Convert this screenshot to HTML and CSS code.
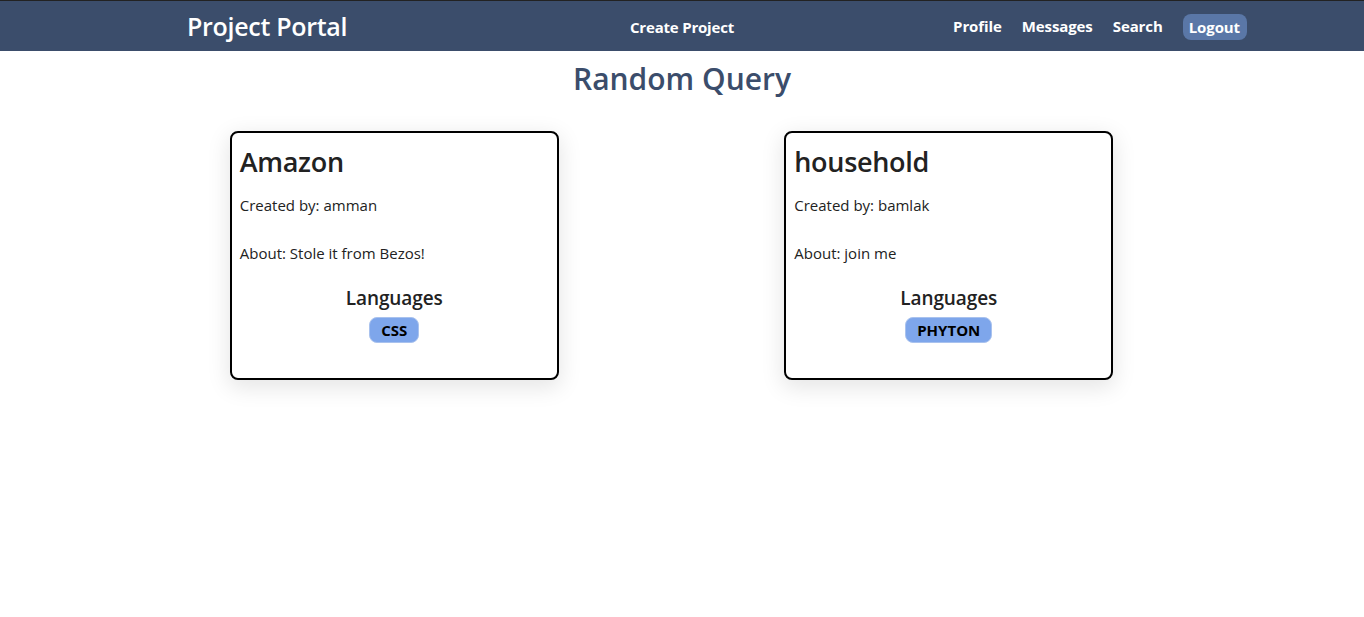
FILE: index.html
```html
<!DOCTYPE html>
<html lang="en">
<head>
<meta charset="utf-8">
<title>Project Portal</title>
<link rel="stylesheet" href="styles.css">
</head>
<body>
<header class="nav">
  <div class="nav-inner">
    <a class="brand" href="#">Project Portal</a>
    <a class="nav-center" href="#">Create Project</a>
    <nav class="nav-links">
      <a href="#">Profile</a>
      <a href="#">Messages</a>
      <a href="#">Search</a>
      <a class="logout" href="#">Logout</a>
    </nav>
  </div>
</header>
<main>
  <h1 class="page-title">Random Query</h1>
  <div class="cards">
    <div class="cell">
      <div class="card">
        <h2>Amazon</h2>
        <p>Created by: amman</p>
        <p>About: Stole it from Bezos!</p>
        <h3>Languages</h3>
        <div class="badges"><span class="badge">CSS</span></div>
      </div>
    </div>
    <div class="cell">
      <div class="card">
        <h2>household</h2>
        <p>Created by: bamlak</p>
        <p>About: join me</p>
        <h3>Languages</h3>
        <div class="badges"><span class="badge">PHYTON</span></div>
      </div>
    </div>
  </div>
</main>
</body>
</html>
```
FILE: styles.css
```css
* { box-sizing: border-box; }
html, body { min-height: 100%; }
body {
  margin: 0;
  min-height: 100vh;
  font-family: "Open Sans", "Noto Sans", sans-serif;
  color: #222;
  background: #fff;
}
a { text-decoration: none; color: inherit; }
.nav {
  background: #3b4d6b;
  border-top: 1px solid #222;
  height: 51px;
}
.nav-inner {
  display: grid;
  grid-template-columns: 1fr auto 1fr;
  align-items: center;
  height: 100%;
  padding: 0 117px;
}
.brand {
  color: #fff;
  font-size: 25px;
  font-weight: 600;
  padding-left: 70px;
  letter-spacing: -0.3px;
}
.nav-center {
  color: #fff;
  font-weight: 700;
  font-size: 15px;
  letter-spacing: -0.2px;
  padding-top: 1px;
}
.nav-links {
  display: flex;
  justify-content: flex-end;
  align-items: center;
  gap: 20px;
}
.nav-links a {
  color: #fff;
  font-weight: 700;
  font-size: 15px;
  letter-spacing: -0.1px;
}
.nav-links .logout {
  background: #5a77a7;
  border-radius: 8px;
  padding: 3px 7px 3px 6px;
  margin-top: 1px;
}
.page-title {
  margin: 8px 0 0;
  text-align: center;
  color: #3b4d6b;
  font-size: 30px;
  font-weight: 600;
  line-height: 40px;
}
.cards {
  display: grid;
  grid-template-columns: 1fr 1fr;
  width: 1109px;
  margin-left: 117px;
  margin-top: 32px;
}
.cell { display: flex; justify-content: center; }
.card {
  width: 329px;
  height: 249px;
  border: 2px solid #000;
  border-radius: 8px;
  padding: 8px 8px;
  background: #fff;
  box-shadow: 0 6px 22px 2px rgba(0,0,0,0.1);
}
.card h2 {
  margin: 3px 0 13px;
  font-size: 27px;
  font-weight: 600;
  line-height: 36px;
  letter-spacing: -0.3px;
}
.card p {
  margin: 0 0 24px;
  font-size: 15px;
  line-height: 24px;
  letter-spacing: 0;
}
.card h3 {
  margin: -4px 0 0;
  text-align: center;
  font-size: 19px;
  font-weight: 600;
  line-height: 26px;
  letter-spacing: -0.1px;
}
.badges {
  display: flex;
  justify-content: center;
  margin-top: 6px;
}
.badge {
  background: #7ea6eb;
  border: 1px solid #a9c2ee;
  border-radius: 8px;
  padding: 1px 11px;
  font-weight: 700;
  font-size: 15px;
  line-height: 22px;
  color: #000;
}
```
